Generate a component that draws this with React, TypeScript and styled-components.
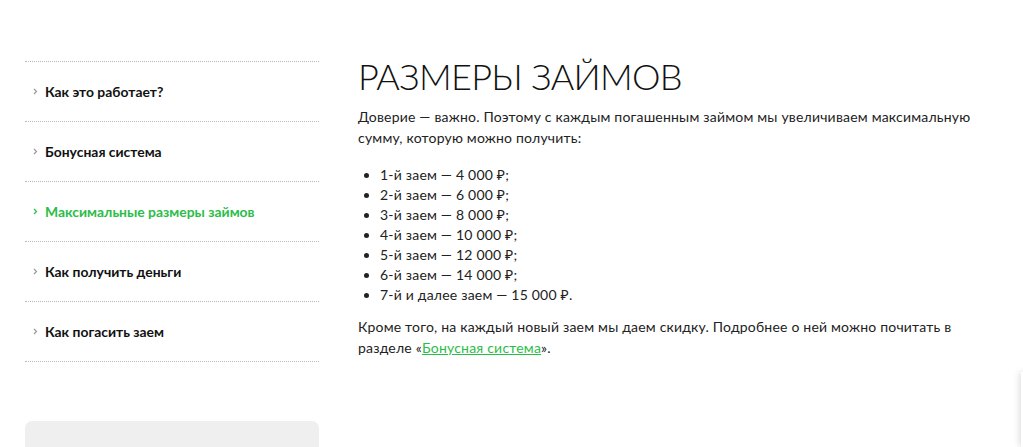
import styled, { createGlobalStyle } from 'styled-components';

const GlobalStyle = createGlobalStyle`
  body {
    margin: 0;
    background: #fff;
    font-family: 'Lato', 'Noto Sans', sans-serif;
    color: #1f1f1f;
  }
`;

const Page = styled.div`
  display: flex;
  gap: 39px;
  padding: 61px 0 0 25px;
  position: relative;
  height: 447px;
  box-sizing: border-box;
  overflow: hidden;
`;

const Sidebar = styled.aside`
  width: 294px;
  flex-shrink: 0;
  display: flex;
  flex-direction: column;
`;

const Menu = styled.ul`
  list-style: none;
  margin: 0;
  padding: 0;
  border-top: 1px dotted #b9b9b9;
`;

const MenuItem = styled.li<{ $active?: boolean }>`
  height: 59px;
  display: flex;
  align-items: center;
  gap: 7px;
  padding-left: 8px;
  border-bottom: 1px dotted #b9b9b9;
  font-size: 13.9px;
  font-weight: 700;
  color: ${(p) => (p.$active ? '#2bbd49' : '#111')};
  cursor: pointer;
  & svg {
    color: ${(p) => (p.$active ? '#2bbd49' : '#9a9a9a')};
  }
`;

const Banner = styled.div`
  margin-top: 59px;
  height: 26px;
  background: #efefef;
  border-radius: 7px 7px 0 0;
`;

const Main = styled.main`
  width: 628px;
`;

const Title = styled.h1`
  margin: -7px 0 0;
  font-size: 36px;
  font-weight: 300;
  line-height: 44px;
  letter-spacing: -0.7px;
  color: #111;
`;

const Text = styled.p<{ $gap?: number }>`
  margin: ${(p) => p.$gap ?? 9}px 0 0;
  font-size: 14px;
  line-height: 20.5px;
  letter-spacing: 0.2px;
  color: #222;
`;

const Amounts = styled.ul`
  margin: 17px 0 0;
  padding-left: 22px;
  font-size: 14px;
  line-height: 20px;
  letter-spacing: 0.2px;
  color: #222;
`;

const Link = styled.a`
  color: #2bbd49;
  text-decoration: underline;
`;

const EdgeWidget = styled.div`
  position: absolute;
  left: 1021px;
  top: 372px;
  width: 60px;
  height: 75px;
  background: #fff;
  box-shadow: -2px 0 6px rgba(0, 0, 0, 0.12);
`;

const Chevron = () => (
  <svg width="5" height="7" viewBox="0 0 5 7">
    <polyline points="1,1 3.5,3.5 1,6" fill="none" stroke="currentColor" strokeWidth="1.2" />
  </svg>
);

const menu = [
  'Как это работает?',
  'Бонусная система',
  'Максимальные размеры займов',
  'Как получить деньги',
  'Как погасить заем',
];

const loans = [
  '1-й заем — 4 000 ₽;',
  '2-й заем — 6 000 ₽;',
  '3-й заем — 8 000 ₽;',
  '4-й заем — 10 000 ₽;',
  '5-й заем — 12 000 ₽;',
  '6-й заем — 14 000 ₽;',
  '7-й и далее заем — 15 000 ₽.',
];

export default function App() {
  return (
    <>
      <GlobalStyle />
      <Page>
        <Sidebar>
          <Menu>
            {menu.map((item, i) => (
              <MenuItem key={item} $active={i === 2}>
                <Chevron />
                {item}
              </MenuItem>
            ))}
          </Menu>
          <Banner />
        </Sidebar>
        <Main>
          <Title>РАЗМЕРЫ ЗАЙМОВ</Title>
          <Text>
            Доверие — важно. Поэтому с каждым погашенным займом мы увеличиваем максимальную
            сумму, которую можно получить:
          </Text>
          <Amounts>
            {loans.map((l) => (
              <li key={l}>{l}</li>
            ))}
          </Amounts>
          <Text $gap={12}>
            Кроме того, на каждый новый заем мы даем скидку. Подробнее о ней можно почитать в
            разделе «<Link href="#">Бонусная система</Link>».
          </Text>
        </Main>
        <EdgeWidget />
      </Page>
    </>
  );
}
